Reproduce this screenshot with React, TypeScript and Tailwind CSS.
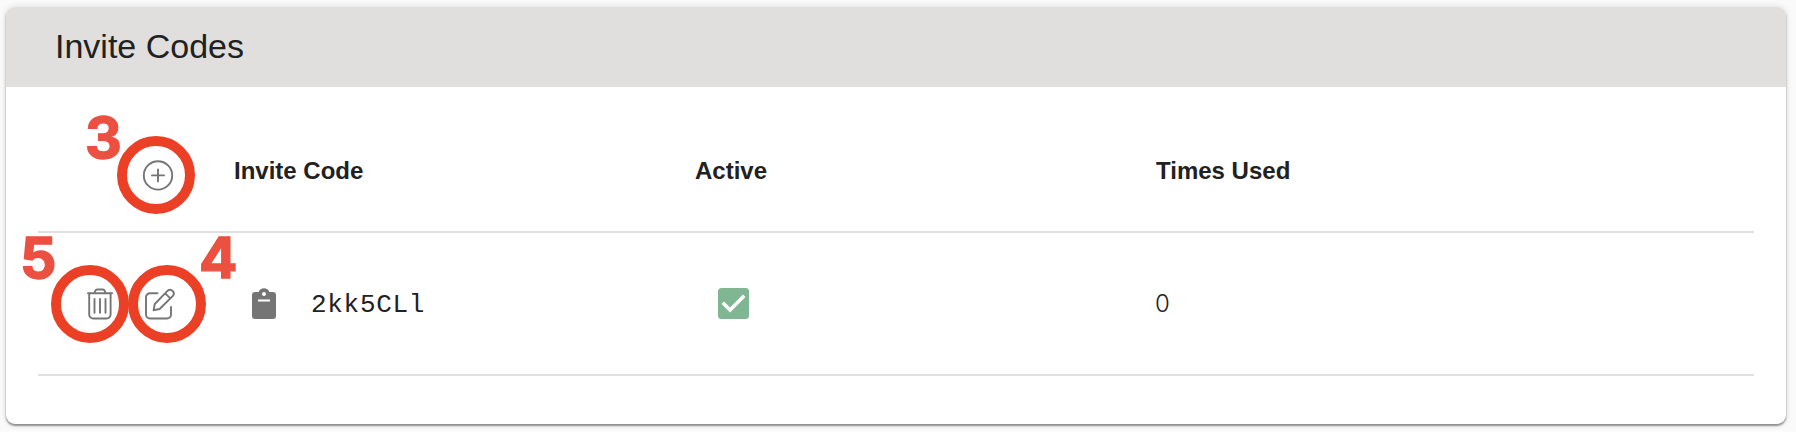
import type { ReactNode } from "react";
import clsx from "clsx";

type InviteCode = {
  code: string;
  active: boolean;
  timesUsed: number;
};

const inviteCodes: InviteCode[] = [{ code: "2kk5CLl", active: true, timesUsed: 0 }];

const PlusCircleIcon = () => (
  <svg className="size-8" viewBox="0 0 32 32" fill="none" stroke="#757575" strokeWidth="1.9" strokeLinecap="round">
    <circle cx="16" cy="16.4" r="14.2" />
    <path d="M16 10.4v12M10 16.4h12" />
  </svg>
);

const TrashIcon = () => (
  <svg className="h-8 w-[26px]" viewBox="0 0 26 32" fill="none" stroke="#757575" strokeWidth="1.9" strokeLinecap="round" strokeLinejoin="round">
    <path d="M1 5.3h24M2.2 5.3v21.2a4 4 0 0 0 4 4h13.4a4 4 0 0 0 4-4V5.3" />
    <path d="M7.5 5l.8-2.2a2 2 0 0 1 1.9-1.3h5.6a2 2 0 0 1 1.9 1.3l.8 2.2" />
    <path d="M7.5 11v13.8M13 11v13.8M18.5 11v13.8" />
  </svg>
);

const EditIcon = () => (
  <svg className="h-8 w-[30px]" viewBox="0 0 30 32" fill="none" stroke="#757575" strokeWidth="1.9" strokeLinecap="round" strokeLinejoin="round">
    <path d="M12.5 5.3H5a4 4 0 0 0-4 4v17.2a4 4 0 0 0 4 4h17a4 4 0 0 0 4-4V19" />
    <path d="M8.6 22.2l1.2-6.2L22.7 2.7a3.7 3.7 0 0 1 5.2 5.2L14.6 21zM20.2 5.3l5.1 5.1" />
  </svg>
);

const ClipboardIcon = () => (
  <svg className="h-[31px] w-6" viewBox="0 0 24 31">
    <path
      fill="#757575"
      fillRule="evenodd"
      d="M3 4h3.6a5.8 5.8 0 0 1 10.8 0H21a3 3 0 0 1 3 3v21a3 3 0 0 1-3 3H3a3 3 0 0 1-3-3V7a3 3 0 0 1 3-3zM12 4a2 2 0 1 0 0 4 2 2 0 0 0 0-4zM6 11.6v1.8h12v-1.8z"
    />
  </svg>
);

const CheckedBox = () => (
  <svg className="size-[31px]" viewBox="0 0 31 31">
    <rect width="31" height="31" rx="3.5" fill="#81b692" />
    <path d="M4.8 14.7l7.3 7.3L26.2 7.8" fill="none" stroke="#fff" strokeWidth="3.4" />
  </svg>
);

// Red ring and step number laid over an action button
const Marker = ({ label, ring, number }: { label: string; ring: string; number: string }) => (
  <>
    <span className={clsx("absolute size-[78px] rounded-full border-[10px] border-[#eb4026]", ring)} />
    <span className={clsx("absolute font-[Inter] text-[57px] leading-[60px] font-bold text-[#eb5040] [-webkit-text-stroke:1.4px_#eb5040]", number)}>
      {label}
    </span>
  </>
);

const Action = ({ label, children }: { label: string; children: ReactNode }) => (
  <button type="button" aria-label={label} className="relative flex">
    {children}
  </button>
);

const rowClass = "grid grid-cols-[196px_461px_461px_1fr] border-b-2 border-[#e0e0e0]";

export default function App() {
  return (
    <div className="h-[432px] overflow-hidden bg-[#fafafa] px-1.5 pt-[7px] font-['Liberation_Sans',Arial,sans-serif] text-[#212121]">
      <section className="h-[417px] w-[1780px] rounded-[9px] bg-white shadow-[0_2px_2px_rgba(0,0,0,0.4),0_0_6px_rgba(0,0,0,0.14)]">
        <header className="flex h-20 items-center rounded-t-[9px] bg-[#e0dfdd] pb-0.5 pl-[49px]">
          <h1 className="text-[34px] leading-10">Invite Codes</h1>
        </header>

        <div className="mx-8">
          <div className={clsx(rowClass, "h-[146px] pt-[70px]")}>
            <div className="pt-[2px] pl-[104px]">
              <Action label="Add invite code">
                <PlusCircleIcon />
                <Marker label="3" ring="-left-[25px] -top-[23px]" number="-left-[57px] -top-[51px]" />
              </Action>
            </div>
            <h2 className="text-2xl leading-7 font-bold">Invite Code</h2>
            <h2 className="text-2xl leading-7 font-bold">Active</h2>
            <h2 className="text-2xl leading-7 font-bold">Times Used</h2>
          </div>

          {inviteCodes.map((invite) => (
            <div key={invite.code} className={clsx(rowClass, "h-[143px] items-center")}>
              <div className="flex gap-8 pl-[49px]">
                <Action label="Delete invite code">
                  <TrashIcon />
                  <Marker label="5" ring="-left-[36px] -top-[23px]" number="-left-[67px] -top-[60px]" />
                </Action>
                <Action label="Edit invite code">
                  <EditIcon />
                  <Marker label="4" ring="-left-[17px] -top-[23px]" number="left-[54px] -top-[60px]" />
                </Action>
              </div>
              <div className="flex items-center gap-[35px] pl-[18px]">
                <ClipboardIcon />
                <span className="pt-0.5 font-['Liberation_Mono',monospace] text-[26px] leading-8 tracking-[0.7px]">
                  {invite.code}
                </span>
              </div>
              <div className="pl-[23px]">{invite.active && <CheckedBox />}</div>
              <div className="-ml-px font-[Inter] text-2xl leading-8 font-light">{invite.timesUsed}</div>
            </div>
          ))}
        </div>
      </section>
    </div>
  );
}
